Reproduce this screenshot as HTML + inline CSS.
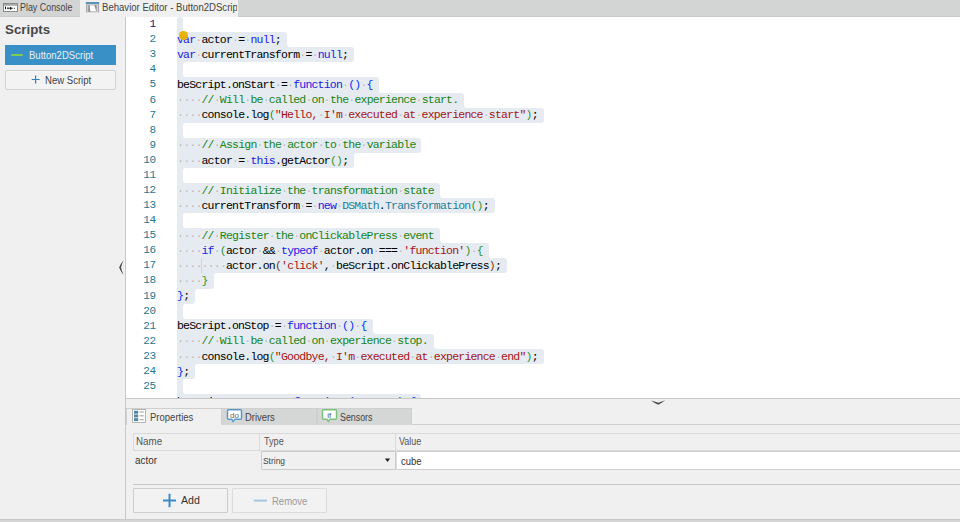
<!DOCTYPE html>
<html><head><meta charset="utf-8">
<style>
*{margin:0;padding:0;box-sizing:border-box}
html,body{width:960px;height:522px;overflow:hidden;background:#f0f0f0;font-family:"Liberation Sans",sans-serif;color:#333}
.abs{position:absolute}
.t{position:absolute;font-size:10px;line-height:10px;white-space:nowrap;color:#444;transform-origin:0 0}
#tabstrip{left:0;top:0;width:960px;height:17px;background:#d3d4d4;border-bottom:1px solid #c9caca}
#sidebar{left:0;top:17px;width:126px;height:505px;background:#f0f0f0;border-right:1px solid #c8c8c8}
#editor{left:126px;top:17px;width:834px;height:381px;background:#fff;overflow:hidden}
#edbottom{left:126px;top:398px;width:834px;height:1px;background:#c6c6c6}
.cl{position:absolute;left:51px;height:15.08px;font-family:"Liberation Mono",monospace;font-size:11.5px;letter-spacing:-0.79px;white-space:pre;color:#000;line-height:15.08px}
.ln{position:absolute;left:0;width:29.6px;text-align:right;font-family:"Liberation Mono",monospace;font-size:11px;letter-spacing:-0.49px;color:#237893;line-height:15.08px}
.act{color:#0b216f}
.sel{position:absolute;background:#e5ebf1;height:15.08px}
.k{color:#2222e0}.c{color:#188418}.s{color:#a31515}.ty{color:#267f99}
.b1{color:#0431fa}.b2{color:#319331}.b3{color:#7b3814}
.w{color:rgba(51,51,51,.3)}
#bottom{left:126px;top:399px;width:834px;height:120px;background:#f0f0f0}
.tab{position:absolute;top:407.5px;height:17px;border:1px solid #cfcfcf;border-bottom:none}
.btn{position:absolute;border:1px solid #cdcdcd;background:#f2f2f2;border-radius:1px}
</style></head><body>
<div id="tabstrip" class="abs">
  <div class="abs" style="left:80px;top:0;width:158px;height:17px;background:#f0f0f0"></div>
  <span class="t" style="left:20.2px;top:3px;transform:scaleX(0.89)">Play Console</span>
  <div class="abs" style="left:102px;top:0;width:134.8px;height:16px;overflow:hidden"><span class="t" style="left:0;top:3px;transform:scaleX(0.958)">Behavior Editor - Button2DScript</span></div>
</div>
<svg class="abs" style="left:0;top:0" width="960" height="30">
  <rect x="3.5" y="3.5" width="14" height="8" fill="#fff" stroke="#8a8a8a" stroke-width="1"/>
  <rect x="4" y="4" width="13" height="1.8" fill="#a8a8a8"/>
  <rect x="5" y="6.6" width="1" height="2.6" fill="#111"/>
  <rect x="7" y="7.6" width="2" height="1.2" fill="#111"/>
  <ellipse cx="10.6" cy="8.3" rx="1.1" ry="1.4" fill="#111"/>
  <rect x="12.2" y="7.8" width="1" height="0.9" fill="#333"/>
  <rect x="14" y="7.8" width="1" height="0.9" fill="#333"/>
  <rect x="85.8" y="2" width="13.4" height="2.2" fill="#5d93b0"/>
  <rect x="86" y="4.2" width="1.5" height="8.3" fill="#a9a9a9"/>
  <rect x="97.6" y="4.2" width="1.5" height="8.3" fill="#a9a9a9"/>
  <path d="M88.2,4.8 L96.7,4.8 L96.7,12.2 L88.2,12.2z" fill="#8c8c8c"/>
  <path d="M89.6,5.2 L94.3,5.2 L96.3,11.4 L90.3,11.4z" fill="#fff"/>
</svg>
<div id="sidebar" class="abs">
  <span class="abs" style="left:5.1px;top:5.3px;font-size:13.3px;font-weight:bold;color:#484848">Scripts</span>
  <div class="abs" style="left:5px;top:27.5px;width:111px;height:20.5px;background:#3990c6"></div>
  <div class="abs" style="left:10.5px;top:36.8px;width:12.5px;height:2.4px;border-radius:1.2px;background:#7ccb52"></div>
  <span class="t" style="left:29px;top:32.8px;font-size:10.5px;color:#e8f2fa;transform:scaleX(0.91)">Button2DScript</span>
  <div class="abs" style="left:5px;top:52.5px;width:111px;height:20px;background:#f3f3f3;border:1px solid #d2d2d2;border-radius:2px"></div>
  <svg class="abs" style="left:0;top:0" width="126" height="100"><path d="M35.6,58.6 v7.9 M31.7,62.5 h7.9" stroke="#2e7fc0" stroke-width="1.2"/></svg>
  <span class="t" style="left:45.3px;top:58.5px;transform:scaleX(0.956)">New Script</span>
</div>
<div id="editor" class="abs">
<div class="sel" style="top:0px;height:15px;left:51px;width:6.11px;border-radius:3px 3px 0px 0px"></div>
<div class="sel" style="top:12px;height:3px;left:57.11px;width:3px"><div style="width:3px;height:3px;background:#fff;border-bottom-left-radius:3px"></div></div>
<div class="sel" style="top:15px;height:15px;left:51px;width:109.98px;border-radius:0px 3px 0px 0px"></div>
<div class="sel" style="top:27px;height:3px;left:160.98px;width:3px"><div style="width:3px;height:3px;background:#fff;border-bottom-left-radius:3px"></div></div>
<div class="sel" style="top:30px;height:15px;left:51px;width:177.19px;border-radius:0px 3px 3px 0px"></div>
<div class="sel" style="top:45px;height:15px;left:51px;width:6.11px;border-radius:0px 0px 0px 0px"></div>
<div class="sel" style="top:45px;height:3px;left:57.11px;width:3px"><div style="width:3px;height:3px;background:#fff;border-top-left-radius:3px"></div></div>
<div class="sel" style="top:57px;height:3px;left:57.11px;width:3px"><div style="width:3px;height:3px;background:#fff;border-bottom-left-radius:3px"></div></div>
<div class="sel" style="top:60px;height:16px;left:51px;width:201.63px;border-radius:0px 3px 0px 0px"></div>
<div class="sel" style="top:73px;height:3px;left:252.63px;width:3px"><div style="width:3px;height:3px;background:#fff;border-bottom-left-radius:3px"></div></div>
<div class="sel" style="top:76px;height:15px;left:51px;width:287.17px;border-radius:0px 3px 0px 0px"></div>
<div class="sel" style="top:88px;height:3px;left:338.17px;width:3px"><div style="width:3px;height:3px;background:#fff;border-bottom-left-radius:3px"></div></div>
<div class="sel" style="top:91px;height:15px;left:51px;width:366.60px;border-radius:0px 3px 3px 0px"></div>
<div class="sel" style="top:106px;height:15px;left:51px;width:6.11px;border-radius:0px 0px 0px 0px"></div>
<div class="sel" style="top:106px;height:3px;left:57.11px;width:3px"><div style="width:3px;height:3px;background:#fff;border-top-left-radius:3px"></div></div>
<div class="sel" style="top:118px;height:3px;left:57.11px;width:3px"><div style="width:3px;height:3px;background:#fff;border-bottom-left-radius:3px"></div></div>
<div class="sel" style="top:121px;height:15px;left:51px;width:244.40px;border-radius:0px 3px 3px 0px"></div>
<div class="sel" style="top:136px;height:15px;left:51px;width:177.19px;border-radius:0px 0px 3px 0px"></div>
<div class="sel" style="top:136px;height:3px;left:228.19px;width:3px"><div style="width:3px;height:3px;background:#fff;border-top-left-radius:3px"></div></div>
<div class="sel" style="top:151px;height:15px;left:51px;width:6.11px;border-radius:0px 0px 0px 0px"></div>
<div class="sel" style="top:151px;height:3px;left:57.11px;width:3px"><div style="width:3px;height:3px;background:#fff;border-top-left-radius:3px"></div></div>
<div class="sel" style="top:163px;height:3px;left:57.11px;width:3px"><div style="width:3px;height:3px;background:#fff;border-bottom-left-radius:3px"></div></div>
<div class="sel" style="top:166px;height:15px;left:51px;width:262.73px;border-radius:0px 3px 0px 0px"></div>
<div class="sel" style="top:178px;height:3px;left:313.73px;width:3px"><div style="width:3px;height:3px;background:#fff;border-bottom-left-radius:3px"></div></div>
<div class="sel" style="top:181px;height:15px;left:51px;width:317.72px;border-radius:0px 3px 3px 0px"></div>
<div class="sel" style="top:196px;height:15px;left:51px;width:6.11px;border-radius:0px 0px 0px 0px"></div>
<div class="sel" style="top:196px;height:3px;left:57.11px;width:3px"><div style="width:3px;height:3px;background:#fff;border-top-left-radius:3px"></div></div>
<div class="sel" style="top:208px;height:3px;left:57.11px;width:3px"><div style="width:3px;height:3px;background:#fff;border-bottom-left-radius:3px"></div></div>
<div class="sel" style="top:211px;height:15px;left:51px;width:262.73px;border-radius:0px 3px 0px 0px"></div>
<div class="sel" style="top:223px;height:3px;left:313.73px;width:3px"><div style="width:3px;height:3px;background:#fff;border-bottom-left-radius:3px"></div></div>
<div class="sel" style="top:226px;height:15px;left:51px;width:311.61px;border-radius:0px 3px 0px 0px"></div>
<div class="sel" style="top:238px;height:3px;left:362.61px;width:3px"><div style="width:3px;height:3px;background:#fff;border-bottom-left-radius:3px"></div></div>
<div class="sel" style="top:241px;height:15px;left:51px;width:329.94px;border-radius:0px 3px 3px 0px"></div>
<div class="sel" style="top:256px;height:16px;left:51px;width:36.66px;border-radius:0px 0px 3px 0px"></div>
<div class="sel" style="top:256px;height:3px;left:87.66px;width:3px"><div style="width:3px;height:3px;background:#fff;border-top-left-radius:3px"></div></div>
<div class="sel" style="top:272px;height:15px;left:51px;width:18.33px;border-radius:0px 0px 3px 0px"></div>
<div class="sel" style="top:272px;height:3px;left:69.33px;width:3px"><div style="width:3px;height:3px;background:#fff;border-top-left-radius:3px"></div></div>
<div class="sel" style="top:287px;height:15px;left:51px;width:6.11px;border-radius:0px 0px 0px 0px"></div>
<div class="sel" style="top:287px;height:3px;left:57.11px;width:3px"><div style="width:3px;height:3px;background:#fff;border-top-left-radius:3px"></div></div>
<div class="sel" style="top:299px;height:3px;left:57.11px;width:3px"><div style="width:3px;height:3px;background:#fff;border-bottom-left-radius:3px"></div></div>
<div class="sel" style="top:302px;height:15px;left:51px;width:195.52px;border-radius:0px 3px 0px 0px"></div>
<div class="sel" style="top:314px;height:3px;left:246.52px;width:3px"><div style="width:3px;height:3px;background:#fff;border-bottom-left-radius:3px"></div></div>
<div class="sel" style="top:317px;height:15px;left:51px;width:256.62px;border-radius:0px 3px 0px 0px"></div>
<div class="sel" style="top:329px;height:3px;left:307.62px;width:3px"><div style="width:3px;height:3px;background:#fff;border-bottom-left-radius:3px"></div></div>
<div class="sel" style="top:332px;height:15px;left:51px;width:366.60px;border-radius:0px 3px 3px 0px"></div>
<div class="sel" style="top:347px;height:15px;left:51px;width:18.33px;border-radius:0px 0px 3px 0px"></div>
<div class="sel" style="top:347px;height:3px;left:69.33px;width:3px"><div style="width:3px;height:3px;background:#fff;border-top-left-radius:3px"></div></div>
<div class="sel" style="top:362px;height:15px;left:51px;width:6.11px;border-radius:0px 0px 0px 0px"></div>
<div class="sel" style="top:362px;height:3px;left:57.11px;width:3px"><div style="width:3px;height:3px;background:#fff;border-top-left-radius:3px"></div></div>
<div class="sel" style="top:374px;height:3px;left:57.11px;width:3px"><div style="width:3px;height:3px;background:#fff;border-bottom-left-radius:3px"></div></div>
<div class="sel" style="top:377px;height:15px;left:51px;width:244.40px;border-radius:0px 3px 3px 3px"></div>
<div class="ln act" style="top:0.10px">1</div>
<div class="ln" style="top:15.18px">2</div>
<div class="ln" style="top:30.26px">3</div>
<div class="ln" style="top:45.34px">4</div>
<div class="ln" style="top:60.42px">5</div>
<div class="ln" style="top:75.50px">6</div>
<div class="ln" style="top:90.58px">7</div>
<div class="ln" style="top:105.66px">8</div>
<div class="ln" style="top:120.74px">9</div>
<div class="ln" style="top:135.82px">10</div>
<div class="ln" style="top:150.90px">11</div>
<div class="ln" style="top:165.98px">12</div>
<div class="ln" style="top:181.06px">13</div>
<div class="ln" style="top:196.14px">14</div>
<div class="ln" style="top:211.22px">15</div>
<div class="ln" style="top:226.30px">16</div>
<div class="ln" style="top:241.38px">17</div>
<div class="ln" style="top:256.46px">18</div>
<div class="ln" style="top:271.54px">19</div>
<div class="ln" style="top:286.62px">20</div>
<div class="ln" style="top:301.70px">21</div>
<div class="ln" style="top:316.78px">22</div>
<div class="ln" style="top:331.86px">23</div>
<div class="ln" style="top:346.94px">24</div>
<div class="ln" style="top:362.02px">25</div>
<div class="cl" style="top:-0.20px"></div>
<div class="cl" style="top:14.88px"><span class="k">var</span><span class="w">·</span>actor<span class="w">·</span>=<span class="w">·</span><span class="k">null</span>;</div>
<div class="cl" style="top:29.96px"><span class="k">var</span><span class="w">·</span>currentTransform<span class="w">·</span>=<span class="w">·</span><span class="k">null</span>;</div>
<div class="cl" style="top:45.04px"></div>
<div class="cl" style="top:60.12px">beScript.onStart<span class="w">·</span>=<span class="w">·</span><span class="k">function</span><span class="w">·</span><span class="b1">()</span><span class="w">·</span><span class="b1">{</span></div>
<div class="cl" style="top:75.20px"><span class="w">·</span><span class="w">·</span><span class="w">·</span><span class="w">·</span><span class="c">//</span><span class="w">·</span><span class="c">Will</span><span class="w">·</span><span class="c">be</span><span class="w">·</span><span class="c">called</span><span class="w">·</span><span class="c">on</span><span class="w">·</span><span class="c">the</span><span class="w">·</span><span class="c">experience</span><span class="w">·</span><span class="c">start.</span></div>
<div class="cl" style="top:90.28px"><span class="w">·</span><span class="w">·</span><span class="w">·</span><span class="w">·</span>console.log<span class="b2">(</span><span class="s">"Hello,</span><span class="w">·</span><span class="s">I'm</span><span class="w">·</span><span class="s">executed</span><span class="w">·</span><span class="s">at</span><span class="w">·</span><span class="s">experience</span><span class="w">·</span><span class="s">start"</span><span class="b2">)</span>;</div>
<div class="cl" style="top:105.36px"></div>
<div class="cl" style="top:120.44px"><span class="w">·</span><span class="w">·</span><span class="w">·</span><span class="w">·</span><span class="c">//</span><span class="w">·</span><span class="c">Assign</span><span class="w">·</span><span class="c">the</span><span class="w">·</span><span class="c">actor</span><span class="w">·</span><span class="c">to</span><span class="w">·</span><span class="c">the</span><span class="w">·</span><span class="c">variable</span></div>
<div class="cl" style="top:135.52px"><span class="w">·</span><span class="w">·</span><span class="w">·</span><span class="w">·</span>actor<span class="w">·</span>=<span class="w">·</span><span class="k">this</span>.getActor<span class="b2">()</span>;</div>
<div class="cl" style="top:150.60px"></div>
<div class="cl" style="top:165.68px"><span class="w">·</span><span class="w">·</span><span class="w">·</span><span class="w">·</span><span class="c">//</span><span class="w">·</span><span class="c">Initialize</span><span class="w">·</span><span class="c">the</span><span class="w">·</span><span class="c">transformation</span><span class="w">·</span><span class="c">state</span></div>
<div class="cl" style="top:180.76px"><span class="w">·</span><span class="w">·</span><span class="w">·</span><span class="w">·</span>currentTransform<span class="w">·</span>=<span class="w">·</span><span class="k">new</span><span class="w">·</span><span class="ty">DSMath</span>.<span class="ty">Transformation</span><span class="b2">()</span>;</div>
<div class="cl" style="top:195.84px"></div>
<div class="cl" style="top:210.92px"><span class="w">·</span><span class="w">·</span><span class="w">·</span><span class="w">·</span><span class="c">//</span><span class="w">·</span><span class="c">Register</span><span class="w">·</span><span class="c">the</span><span class="w">·</span><span class="c">onClickablePress</span><span class="w">·</span><span class="c">event</span></div>
<div class="cl" style="top:226.00px"><span class="w">·</span><span class="w">·</span><span class="w">·</span><span class="w">·</span><span class="k">if</span><span class="w">·</span><span class="b2">(</span>actor<span class="w">·</span>&amp;&amp;<span class="w">·</span><span class="k">typeof</span><span class="w">·</span>actor.on<span class="w">·</span>===<span class="w">·</span><span class="s">'function'</span><span class="b2">)</span><span class="w">·</span><span class="b2">{</span></div>
<div class="cl" style="top:241.08px"><span class="w">·</span><span class="w">·</span><span class="w">·</span><span class="w">·</span><span class="w">·</span><span class="w">·</span><span class="w">·</span><span class="w">·</span>actor.on<span class="b3">(</span><span class="s">'click'</span>,<span class="w">·</span>beScript.onClickablePress<span class="b3">)</span>;</div>
<div class="cl" style="top:256.16px"><span class="w">·</span><span class="w">·</span><span class="w">·</span><span class="w">·</span><span class="b2">}</span></div>
<div class="cl" style="top:271.24px"><span class="b1">}</span>;</div>
<div class="cl" style="top:286.32px"></div>
<div class="cl" style="top:301.40px">beScript.onStop<span class="w">·</span>=<span class="w">·</span><span class="k">function</span><span class="w">·</span><span class="b1">()</span><span class="w">·</span><span class="b1">{</span></div>
<div class="cl" style="top:316.48px"><span class="w">·</span><span class="w">·</span><span class="w">·</span><span class="w">·</span><span class="c">//</span><span class="w">·</span><span class="c">Will</span><span class="w">·</span><span class="c">be</span><span class="w">·</span><span class="c">called</span><span class="w">·</span><span class="c">on</span><span class="w">·</span><span class="c">experience</span><span class="w">·</span><span class="c">stop.</span></div>
<div class="cl" style="top:331.56px"><span class="w">·</span><span class="w">·</span><span class="w">·</span><span class="w">·</span>console.log<span class="b2">(</span><span class="s">"Goodbye,</span><span class="w">·</span><span class="s">I'm</span><span class="w">·</span><span class="s">executed</span><span class="w">·</span><span class="s">at</span><span class="w">·</span><span class="s">experience</span><span class="w">·</span><span class="s">end"</span><span class="b2">)</span>;</div>
<div class="cl" style="top:346.64px"><span class="b1">}</span>;</div>
<div class="cl" style="top:361.72px"></div>
<div class="cl" style="top:376.80px">bescript.onenter<span class="w">·</span>=<span class="w">·</span><span class="k">function</span><span class="w">·</span><span class="b1">(</span>context<span class="b1">)</span><span class="w">·</span><span class="b1">{</span></div>
<div style="position:absolute;left:74.94px;top:241px;width:1px;height:15px;background:#d3d3d3"></div>
<div style="position:absolute;left:53.3px;top:14.4px;width:8.6px;height:8.6px;border-radius:50%;background:#e6b000;opacity:.95"></div>

</div>
<div id="edbottom" class="abs"></div>
<div id="bottom" class="abs"></div>
<svg class="abs" style="left:0;top:0" width="960" height="522">
  <path d="M651,400.4 Q654.5,401.4 658.2,402.7 Q661.8,401.4 665.3,400.3 Q662,402.8 658.2,404.8 Q654.4,402.8 651,400.4Z" fill="#4a4a4a"/>
  <path d="M123.5,260.2 Q121.9,264 121,267.6 Q121.9,271.2 123.5,275.1 Q121.1,272.2 119.1,267.6 Q121.1,263 123.5,260.2Z" fill="#4a4a4a"/>
</svg>
<!-- bottom tabs -->
<div class="abs" style="left:126px;top:424px;width:834px;height:1px;background:#cfcfcf"></div>
<div class="tab" style="left:126px;width:95.5px;background:#f0f0f0;height:17.5px"></div>
<div class="tab" style="left:221.3px;width:95.3px;background:#d5d6d6"></div>
<div class="tab" style="left:316.5px;width:95.5px;background:#d5d6d6"></div>
<svg class="abs" style="left:0;top:0" width="960" height="522">
  <rect x="132.5" y="409.5" width="13" height="13" fill="#fff" stroke="#b5b5b5" stroke-width="1"/>
  <rect x="134" y="410.8" width="4.2" height="2.9" fill="#4f87a3"/>
  <rect x="134" y="414.5" width="4.2" height="2.9" fill="#4f87a3"/>
  <rect x="134" y="418.2" width="4.2" height="2.9" fill="#4f87a3"/>
  <rect x="139.5" y="411.3" width="4.3" height="1.4" fill="#b8b8b8"/>
  <rect x="139.5" y="415.1" width="4.3" height="1.4" fill="#b8b8b8"/>
  <rect x="139.5" y="418.9" width="4.3" height="1.4" fill="#b8b8b8"/>
  <path d="M228.5,409.8 h12 a1,1 0 0 1 1,1 v7.4 a1,1 0 0 1 -1,1 h-5.5 l-2,2.2 l-1.2,-2.2 h-3.3 a1,1 0 0 1 -1,-1 v-7.4 a1,1 0 0 1 1,-1z" fill="#fff" stroke="#5b9bc9" stroke-width="1.5"/>
  <text x="230" y="417.6" font-family="Liberation Sans" font-size="8" fill="#666">do</text>
  <path d="M323.5,409.8 h12 a1,1 0 0 1 1,1 v7.4 a1,1 0 0 1 -1,1 h-5.5 l-1.5,2.2 l-1.7,-2.2 h-3.3 a1,1 0 0 1 -1,-1 v-7.4 a1,1 0 0 1 1,-1z" fill="#fff" stroke="#7cc27c" stroke-width="1.5"/>
  <text x="327.3" y="417.6" font-family="Liberation Sans" font-size="8" fill="#555">if</text>
</svg>
<span class="t" style="left:149.9px;top:412.7px;transform:scaleX(0.951)">Properties</span>
<span class="t" style="left:245px;top:412.7px;transform:scaleX(0.94)">Drivers</span>
<span class="t" style="left:340.4px;top:412.7px;transform:scaleX(0.885)">Sensors</span>
<!-- table -->
<div class="abs" style="left:133.3px;top:432.5px;width:827px;height:18px;border:1px solid #dadada;border-right:none;background:#f0f0f0"></div>
<div class="abs" style="left:259.3px;top:433px;width:1px;height:17px;background:#dadada"></div>
<div class="abs" style="left:395.2px;top:433px;width:1px;height:17px;background:#dadada"></div>
<span class="t" style="left:136.2px;top:437.3px;color:#555;transform:scaleX(0.977)">Name</span>
<span class="t" style="left:263.5px;top:437.3px;color:#555;transform:scaleX(0.91)">Type</span>
<span class="t" style="left:399.1px;top:437.3px;color:#555;transform:scaleX(0.9)">Value</span>
<span class="t" style="left:134.9px;top:456.2px;color:#333;transform:scaleX(0.986)">actor</span>
<div class="abs" style="left:260.5px;top:451px;width:135px;height:18.5px;border:1px solid #cbcbcb;background:#f0f0f0;border-radius:1px"></div>
<span class="t" style="left:263.2px;top:456px;font-size:9.3px;color:#444;transform:scaleX(0.906)">String</span>
<svg class="abs" style="left:0;top:0" width="960" height="522"><path d="M384.9,458.4 h5.2 l-2.6,3.6z" fill="#222"/></svg>
<div class="abs" style="left:396.4px;top:451px;width:564px;height:18.5px;background:#fff;border-top:1px solid #cfcfcf;border-bottom:1px solid #cfcfcf;border-left:1px solid #e0e0e0"></div>
<span class="t" style="left:401.2px;top:456.5px;color:#333;transform:scaleX(0.948)">cube</span>
<div class="abs" style="left:133px;top:484px;width:827px;height:1.2px;background:#c6c6c6"></div>
<div class="btn" style="left:133px;top:488px;width:95px;height:24.5px"></div>
<svg class="abs" style="left:0;top:0" width="960" height="522">
  <path d="M169.5,493.8 v13.5 M163,500.5 h13" stroke="#3b8bc8" stroke-width="2"/>
</svg>
<span class="t" style="left:180.5px;top:496.2px;color:#333;transform:scaleX(1.06)">Add</span>
<div class="btn" style="left:232.3px;top:488px;width:95.2px;height:24.7px;border-color:#dcdcdc"></div>
<svg class="abs" style="left:0;top:0" width="960" height="522"><path d="M253.8,500.6 h13.1" stroke="#a5c7df" stroke-width="2"/></svg>
<span class="t" style="left:271.6px;top:496.5px;color:#9a9a9a;transform:scaleX(0.95)">Remove</span>
<div class="abs" style="left:0;top:519px;width:960px;height:3px;background:#d5d5d5;border-top:1px solid #c9c9c9"></div>
</body></html>
